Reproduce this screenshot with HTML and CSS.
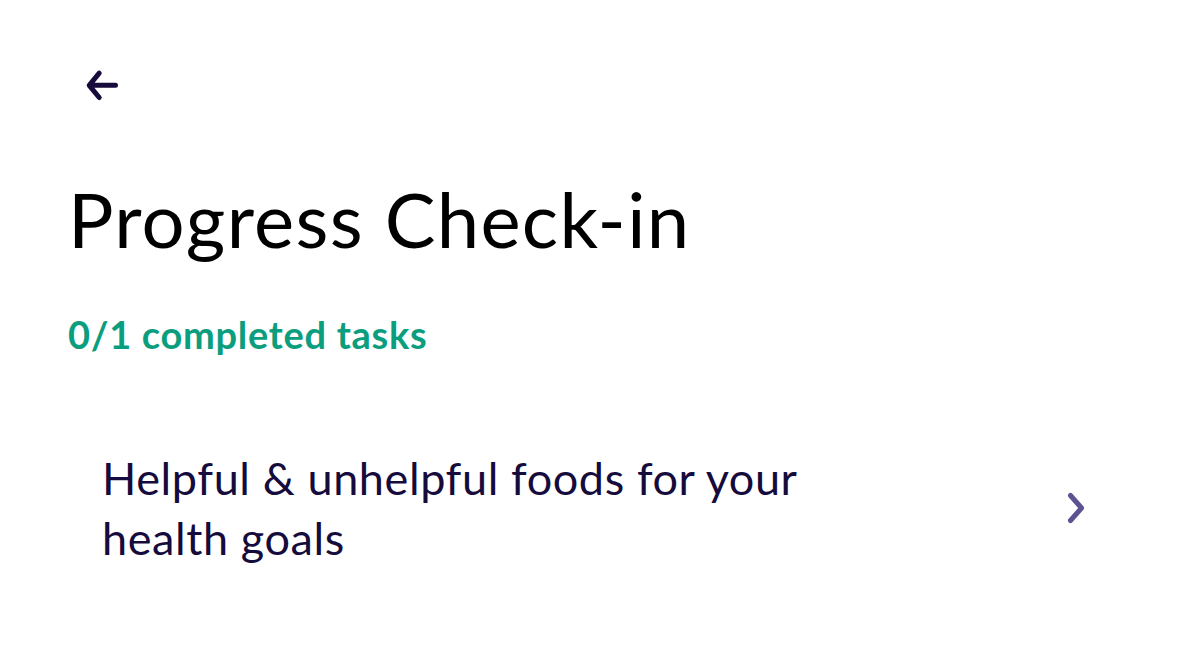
FILE: index.html
```html
<!DOCTYPE html>
<html lang="en">
<head>
    <meta charset="UTF-8">
    <meta name="viewport" content="width=device-width, initial-scale=1.0">
    <title>Progress Check-in</title>
    <link rel="stylesheet" href="styles.css">
</head>
<body>
    <div class="page">
        <button class="back-button" aria-label="Back">
            <svg width="36" height="36" viewBox="0 0 36 36">
                <path d="M30.5 17.3H5M14.2 5.2L4.2 17.3L14.2 29.5" fill="none" stroke="#170b3b" stroke-width="5" stroke-linecap="round" stroke-linejoin="round"/>
            </svg>
        </button>

        <h1 class="title">Progress Check-in</h1>
        <div class="progress">0/1 completed tasks</div>

        <a class="task" href="#">
            <span class="task-name">Helpful &amp; unhelpful foods for your health goals</span>
            <svg class="chevron" width="20" height="34" viewBox="0 0 20 34">
                <path d="M4.5 4.5L15.5 17L4.5 29.5" fill="none" stroke="#5e5391" stroke-width="5" stroke-linecap="round" stroke-linejoin="round"/>
            </svg>
        </a>
    </div>
</body>
</html>
```

FILE: styles.css
```css
* {
    margin: 0;
    padding: 0;
    box-sizing: border-box;
}

body {
    font-family: Lato, "Noto Sans", sans-serif;
    background: #fff;
    color: #000;
}

.page {
    padding: 68px 68px 0 68px;
}

.back-button {
    display: block;
    background: none;
    border: none;
    margin-left: 17px;
    width: 36px;
    height: 36px;
    cursor: pointer;
}

.back-button svg {
    display: block;
}

.title {
    font-size: 76px;
    font-weight: 400;
    line-height: 76px;
    letter-spacing: 1.3px;
    margin-top: 77px;
    color: #000;
}

.progress {
    margin-top: 54px;
    font-size: 38px;
    font-weight: 700;
    letter-spacing: 0.7px;
    color: #0b9e7e;
}

.task {
    display: flex;
    align-items: center;
    justify-content: space-between;
    margin-top: 91px;
    padding-left: 34px;
    padding-right: 46px;
    text-decoration: none;
    color: #150b3c;
}

.task-name {
    font-size: 45px;
    line-height: 60px;
    letter-spacing: 0.6px;
    max-width: 740px;
}

.chevron {
    display: block;
}
```
